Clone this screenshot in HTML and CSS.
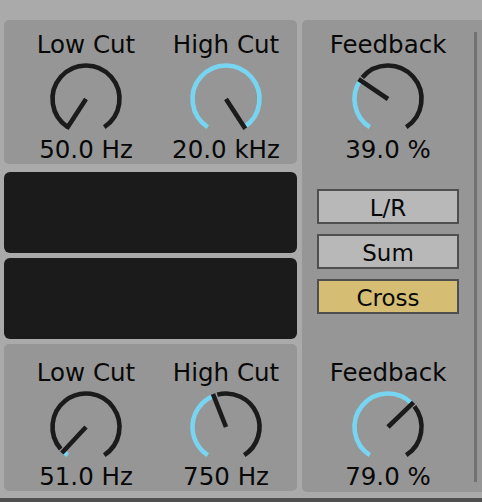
FILE: index.html
```html
<!DOCTYPE html>
<html>
<head>
<meta charset="utf-8">
<link rel="stylesheet" href="styles.css">
</head>
<body>
<div class="device">
  <div class="left">
    <section class="panel panel-top">
      <div class="ctrl">
        <div class="label">Low Cut</div>
        <svg class="knob" width="80" height="80" viewBox="0 0 80 80">
          <path class="arc-off" d="M21.76 68.10 A33.5 33.5 0 1 1 58.24 68.10"/>
          <line class="needle" x1="40" y1="40" x2="20.67" y2="69.77"/>
        </svg>
        <div class="value">50.0 Hz</div>
      </div>
      <div class="ctrl">
        <div class="label">High Cut</div>
        <svg class="knob" width="80" height="80" viewBox="0 0 80 80">
          <path class="arc-on" d="M21.76 68.10 A33.5 33.5 0 1 1 58.24 68.10"/>
          <line class="needle" x1="40" y1="40" x2="59.33" y2="69.77"/>
        </svg>
        <div class="value">20.0 kHz</div>
      </div>
    </section>
    <div class="display"></div>
    <div class="display display-second"></div>
    <section class="panel panel-bottom">
      <div class="ctrl">
        <div class="label">Low Cut</div>
        <svg class="knob" width="80" height="80" viewBox="0 0 80 80">
          <path class="arc-on" d="M21.76 68.10 A33.5 33.5 0 0 1 17.15 64.50"/>
          <path class="arc-off" d="M14.72 61.98 A33.5 33.5 0 1 1 58.24 68.10"/>
          <line class="needle" x1="40" y1="40" x2="15.79" y2="65.96"/>
        </svg>
        <div class="value">51.0 Hz</div>
      </div>
      <div class="ctrl">
        <div class="label">High Cut</div>
        <svg class="knob" width="80" height="80" viewBox="0 0 80 80">
          <path class="arc-on" d="M21.76 68.10 A33.5 33.5 0 0 1 27.72 8.83"/>
          <path class="arc-off" d="M31.33 7.64 A33.5 33.5 0 0 1 58.24 68.10"/>
          <line class="needle" x1="40" y1="40" x2="26.99" y2="6.97"/>
        </svg>
        <div class="value">750 Hz</div>
      </div>
    </section>
  </div>
  <div class="right">
    <div class="right-inner">
      <div class="ctrl ctrl-top">
        <div class="label">Feedback</div>
        <svg class="knob" width="80" height="80" viewBox="0 0 80 80">
          <path class="arc-on" d="M21.76 68.10 A33.5 33.5 0 0 1 12.23 21.27"/>
          <path class="arc-off" d="M14.34 18.47 A33.5 33.5 0 1 1 58.24 68.10"/>
          <line class="needle" x1="40" y1="40" x2="10.57" y2="20.15"/>
        </svg>
        <div class="value">39.0 %</div>
      </div>
      <div class="modes">
        <div class="mode">L/R</div>
        <div class="mode">Sum</div>
        <div class="mode mode-active">Cross</div>
      </div>
      <div class="ctrl ctrl-bottom">
        <div class="label">Feedback</div>
        <svg class="knob" width="80" height="80" viewBox="0 0 80 80">
          <path class="arc-on" d="M21.76 68.10 A33.5 33.5 0 1 1 64.10 16.73"/>
          <path class="arc-off" d="M66.40 19.37 A33.5 33.5 0 0 1 58.24 68.10"/>
          <line class="needle" x1="40" y1="40" x2="65.54" y2="15.34"/>
        </svg>
        <div class="value">79.0 %</div>
      </div>
    </div>
    <div class="scrollbar"></div>
  </div>
</div>
<div class="footer"></div>
</body>
</html>
```
FILE: styles.css
```css
html, body {
  margin: 0;
  padding: 0;
}
body {
  width: 482px;
  height: 502px;
  overflow: hidden;
  background: #aaaaaa;
  font-family: "DejaVu Sans", "Liberation Sans", sans-serif;
  color: #080808;
}
.device {
  display: flex;
  gap: 5px;
  padding: 20px 0 0 4px;
  height: 472px;
  box-sizing: content-box;
}
.left {
  width: 293px;
  display: flex;
  flex-direction: column;
}
.panel {
  background: #969696;
  border-radius: 5px;
  display: grid;
  grid-template-columns: 140px 140px;
  padding-left: 12px;
  box-sizing: border-box;
}
.panel-top {
  height: 144px;
  padding-top: 12px;
}
.panel-bottom {
  height: 147px;
  padding-top: 16px;
  margin-top: 5px;
}
.display {
  height: 81px;
  margin-top: 8px;
  background: #1b1b1b;
  border-radius: 6px;
}
.display-second {
  margin-top: 5px;
}
.ctrl {
  display: flex;
  flex-direction: column;
  align-items: center;
}
.label, .value {
  font-size: 24.5px;
  line-height: 26px;
  height: 26px;
  white-space: nowrap;
}
.knob {
  display: block;
  margin-top: 1px;
}
.panel-top .value, .ctrl-top .value {
  margin-top: -2px;
}
.panel-bottom .value, .ctrl-bottom .value {
  margin-top: -3px;
}
.arc-on, .arc-off {
  fill: none;
  stroke-width: 4.6;
  stroke-linecap: butt;
}
.arc-on {
  stroke: #78d5f1;
}
.arc-off {
  stroke: #1b1b1b;
}
.needle {
  stroke: #1b1b1b;
  stroke-width: 4.6;
  stroke-linecap: butt;
}
.right {
  flex: 1;
  height: 472px;
  background: #969696;
  border-radius: 5px 0 0 5px;
  display: flex;
}
.right-inner {
  width: 172px;
  display: flex;
  flex-direction: column;
  align-items: center;
}
.ctrl-top {
  padding-top: 12px;
}
.modes {
  margin-top: 26px;
  display: flex;
  flex-direction: column;
  gap: 10px;
}
.mode {
  width: 142px;
  height: 35px;
  box-sizing: border-box;
  border: 2px solid #4f4f4f;
  background: #b8b8b8;
  font-size: 23px;
  padding-top: 4px;
  line-height: 27px;
  text-align: center;
}
.mode-active {
  background: #d5be73;
}
.ctrl-bottom {
  margin-top: 46px;
}
.scrollbar {
  width: 3px;
  margin-top: 12px;
  height: 450px;
  background: #717171;
}
.footer {
  margin-top: 6px;
  height: 4px;
  background: #505050;
}
```
